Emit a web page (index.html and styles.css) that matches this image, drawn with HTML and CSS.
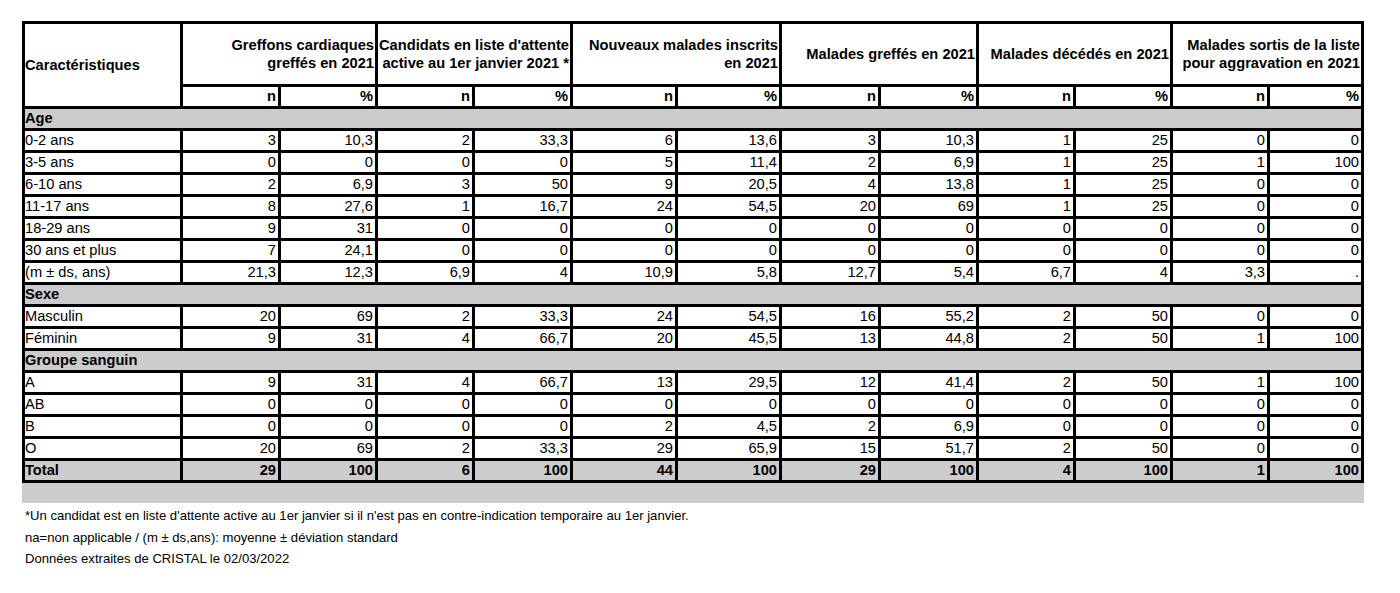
FILE: index.html
```html
<!DOCTYPE html>
<html lang="fr">
<head>
<meta charset="utf-8">
<title>Caractéristiques des greffons cardiaques 2021</title>
<link rel="stylesheet" href="styles.css">
</head>
<body>
<div class="sheet">
  <div class="grid">
    <div class="cell corner">Caractéristiques</div>
    <div class="cell grp">Greffons cardiaques<br>greffés en 2021</div>
    <div class="cell grp">Candidats en liste d'attente<br>active au 1er janvier 2021 *</div>
    <div class="cell grp">Nouveaux malades inscrits<br>en 2021</div>
    <div class="cell grp">Malades greffés en 2021</div>
    <div class="cell grp">Malades décédés en 2021</div>
    <div class="cell grp">Malades sortis de la liste<br>pour aggravation en 2021</div>

    <div class="cell num sub">n</div><div class="cell num sub">%</div>
    <div class="cell num sub">n</div><div class="cell num sub">%</div>
    <div class="cell num sub">n</div><div class="cell num sub">%</div>
    <div class="cell num sub">n</div><div class="cell num sub">%</div>
    <div class="cell num sub">n</div><div class="cell num sub">%</div>
    <div class="cell num sub">n</div><div class="cell num sub">%</div>

    <div class="cell sec">Age</div>

    <div class="cell lab">0-2 ans</div>
    <div class="cell num">3</div><div class="cell num">10,3</div><div class="cell num">2</div><div class="cell num">33,3</div><div class="cell num">6</div><div class="cell num">13,6</div><div class="cell num">3</div><div class="cell num">10,3</div><div class="cell num">1</div><div class="cell num">25</div><div class="cell num">0</div><div class="cell num">0</div>

    <div class="cell lab">3-5 ans</div>
    <div class="cell num">0</div><div class="cell num">0</div><div class="cell num">0</div><div class="cell num">0</div><div class="cell num">5</div><div class="cell num">11,4</div><div class="cell num">2</div><div class="cell num">6,9</div><div class="cell num">1</div><div class="cell num">25</div><div class="cell num">1</div><div class="cell num">100</div>

    <div class="cell lab">6-10 ans</div>
    <div class="cell num">2</div><div class="cell num">6,9</div><div class="cell num">3</div><div class="cell num">50</div><div class="cell num">9</div><div class="cell num">20,5</div><div class="cell num">4</div><div class="cell num">13,8</div><div class="cell num">1</div><div class="cell num">25</div><div class="cell num">0</div><div class="cell num">0</div>

    <div class="cell lab">11-17 ans</div>
    <div class="cell num">8</div><div class="cell num">27,6</div><div class="cell num">1</div><div class="cell num">16,7</div><div class="cell num">24</div><div class="cell num">54,5</div><div class="cell num">20</div><div class="cell num">69</div><div class="cell num">1</div><div class="cell num">25</div><div class="cell num">0</div><div class="cell num">0</div>

    <div class="cell lab">18-29 ans</div>
    <div class="cell num">9</div><div class="cell num">31</div><div class="cell num">0</div><div class="cell num">0</div><div class="cell num">0</div><div class="cell num">0</div><div class="cell num">0</div><div class="cell num">0</div><div class="cell num">0</div><div class="cell num">0</div><div class="cell num">0</div><div class="cell num">0</div>

    <div class="cell lab">30 ans et plus</div>
    <div class="cell num">7</div><div class="cell num">24,1</div><div class="cell num">0</div><div class="cell num">0</div><div class="cell num">0</div><div class="cell num">0</div><div class="cell num">0</div><div class="cell num">0</div><div class="cell num">0</div><div class="cell num">0</div><div class="cell num">0</div><div class="cell num">0</div>

    <div class="cell lab">(m ± ds, ans)</div>
    <div class="cell num">21,3</div><div class="cell num">12,3</div><div class="cell num">6,9</div><div class="cell num">4</div><div class="cell num">10,9</div><div class="cell num">5,8</div><div class="cell num">12,7</div><div class="cell num">5,4</div><div class="cell num">6,7</div><div class="cell num">4</div><div class="cell num">3,3</div><div class="cell num">.</div>

    <div class="cell sec">Sexe</div>

    <div class="cell lab">Masculin</div>
    <div class="cell num">20</div><div class="cell num">69</div><div class="cell num">2</div><div class="cell num">33,3</div><div class="cell num">24</div><div class="cell num">54,5</div><div class="cell num">16</div><div class="cell num">55,2</div><div class="cell num">2</div><div class="cell num">50</div><div class="cell num">0</div><div class="cell num">0</div>

    <div class="cell lab">Féminin</div>
    <div class="cell num">9</div><div class="cell num">31</div><div class="cell num">4</div><div class="cell num">66,7</div><div class="cell num">20</div><div class="cell num">45,5</div><div class="cell num">13</div><div class="cell num">44,8</div><div class="cell num">2</div><div class="cell num">50</div><div class="cell num">1</div><div class="cell num">100</div>

    <div class="cell sec">Groupe sanguin</div>

    <div class="cell lab">A</div>
    <div class="cell num">9</div><div class="cell num">31</div><div class="cell num">4</div><div class="cell num">66,7</div><div class="cell num">13</div><div class="cell num">29,5</div><div class="cell num">12</div><div class="cell num">41,4</div><div class="cell num">2</div><div class="cell num">50</div><div class="cell num">1</div><div class="cell num">100</div>

    <div class="cell lab">AB</div>
    <div class="cell num">0</div><div class="cell num">0</div><div class="cell num">0</div><div class="cell num">0</div><div class="cell num">0</div><div class="cell num">0</div><div class="cell num">0</div><div class="cell num">0</div><div class="cell num">0</div><div class="cell num">0</div><div class="cell num">0</div><div class="cell num">0</div>

    <div class="cell lab">B</div>
    <div class="cell num">0</div><div class="cell num">0</div><div class="cell num">0</div><div class="cell num">0</div><div class="cell num">2</div><div class="cell num">4,5</div><div class="cell num">2</div><div class="cell num">6,9</div><div class="cell num">0</div><div class="cell num">0</div><div class="cell num">0</div><div class="cell num">0</div>

    <div class="cell lab">O</div>
    <div class="cell num">20</div><div class="cell num">69</div><div class="cell num">2</div><div class="cell num">33,3</div><div class="cell num">29</div><div class="cell num">65,9</div><div class="cell num">15</div><div class="cell num">51,7</div><div class="cell num">2</div><div class="cell num">50</div><div class="cell num">0</div><div class="cell num">0</div>

    <div class="cell lab tot">Total</div>
    <div class="cell num tot">29</div><div class="cell num tot">100</div><div class="cell num tot">6</div><div class="cell num tot">100</div><div class="cell num tot">44</div><div class="cell num tot">100</div><div class="cell num tot">29</div><div class="cell num tot">100</div><div class="cell num tot">4</div><div class="cell num tot">100</div><div class="cell num tot">1</div><div class="cell num tot">100</div>
  </div>
  <div class="band"></div>
  <div class="notes">
    <p>*Un candidat est en liste d'attente active au 1er janvier si il n'est pas en contre-indication temporaire au 1er janvier.</p>
    <p>na=non applicable / (m ± ds,ans): moyenne ± déviation standard</p>
    <p>Données extraites de CRISTAL le 02/03/2022</p>
  </div>
</div>
</body>
</html>
```

FILE: styles.css
```css
html, body {
  margin: 0;
  padding: 0;
  background: #ffffff;
}

body {
  font-family: "Liberation Sans", Arial, sans-serif;
  color: #000000;
}

.sheet {
  padding: 21px 0 0 22px;
  width: 1342px;
}

.grid {
  display: grid;
  grid-template-columns: 158px 98px 97px 97px 98px 105px 104px 99px 98px 97px 97px 97px 94px;
  grid-template-rows: 63px repeat(18, 22px);
  border-top: 3px solid #000;
  border-left: 3px solid #000;
  font-size: 14.67px;
}

.cell {
  box-sizing: border-box;
  border-right: 3px solid #000;
  border-bottom: 3px solid #000;
  line-height: 19px;
  white-space: nowrap;
  overflow: hidden;
}

.corner {
  grid-row: span 2;
  display: flex;
  align-items: center;
  font-weight: bold;
  padding-top: 1px;
}

.grp {
  grid-column: span 2;
  display: flex;
  flex-direction: column;
  justify-content: center;
  align-items: flex-end;
  text-align: right;
  font-weight: bold;
  line-height: 18px;
  padding-right: 1px;
}

.sub {
  font-weight: bold;
}

.num {
  text-align: right;
  padding-right: 2px;
}

.lab {
  padding-left: 0;
}

.sec {
  grid-column: 1 / -1;
  background: #cccccc;
  font-weight: bold;
}

.tot {
  background: #cccccc;
  font-weight: bold;
}

.band {
  height: 20px;
  background: #cccccc;
}

.notes {
  font-size: 13.1px;
  line-height: 21.5px;
  padding: 2px 0 0 3px;
}

.notes p {
  margin: 0;
}
```
